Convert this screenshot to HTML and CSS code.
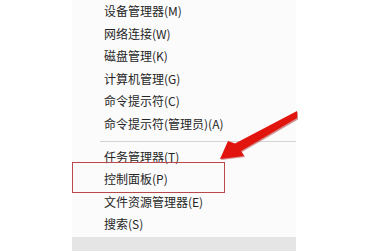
FILE: index.html
```html
<!DOCTYPE html>
<html lang="zh-CN">
<head>
<meta charset="utf-8">
<title>Win+X 菜单</title>
<link rel="stylesheet" href="styles.css">
</head>
<body>
<div class="page">
  <div class="menu">
    <ul class="group first">
      <li class="item">设备管理器(M)</li>
      <li class="item">网络连接(W)</li>
      <li class="item">磁盘管理(K)</li>
      <li class="item">计算机管理(G)</li>
      <li class="item">命令提示符(C)</li>
      <li class="item">命令提示符(管理员)(A)</li>
    </ul>
    <div class="sep"></div>
    <ul class="group">
      <li class="item">任务管理器(T)</li>
      <li class="item marked">控制面板(P)<span class="mark-box"></span></li>
      <li class="item">文件资源管理器(E)</li>
      <li class="item">搜索(S)</li>
    </ul>
    <div class="hover-bar"></div>
  </div>
  <svg class="arrow" width="388" height="251" viewBox="0 0 388 251" aria-hidden="true">
    <polygon class="arrow-shadow" points="221,160 229,142 236,145 298,112 298,119.5 242,152 245,157"/>
    <polygon class="arrow-body" points="220,159 228,141 235,143.5 297,111 297,118 241,151 244,156"/>
  </svg>
</div>
</body>
</html>
```

FILE: styles.css
```css
html, body {
  margin: 0;
  padding: 0;
  background: #ffffff;
  width: 388px;
  height: 251px;
  overflow: hidden;
}

.page {
  position: relative;
  width: 388px;
  height: 251px;
  font-family: "Noto Sans CJK SC", "Noto Sans", sans-serif;
  font-size: 12px;
  color: #262626;
}

.menu {
  margin-left: 72px;
  width: 224px;
  height: 251px;
  background: #fbfbfb;
  display: flex;
  flex-direction: column;
}

.group {
  list-style: none;
  margin: 0;
  padding: 0;
}

.item {
  height: 22.6px;
  line-height: 22.6px;
  padding-left: 32px;
  white-space: nowrap;
  position: relative;
}

.sep {
  margin: 5.5px 0 3.5px 28px;
  border-top: 1px solid #d4d4d4;
}

.hover-bar {
  margin-top: 1.5px;
  flex: 1;
  background: #e5e5e5;
}

.mark-box {
  position: absolute;
  left: 0;
  top: -6.3px;
  width: 151px;
  height: 29px;
  border: 1px solid #b8484a;
}

.arrow {
  position: absolute;
  left: 0;
  top: 0;
}

.arrow-shadow {
  fill: #a01010;
  opacity: 0.45;
}

.arrow-body {
  fill: #e2140e;
}
```
